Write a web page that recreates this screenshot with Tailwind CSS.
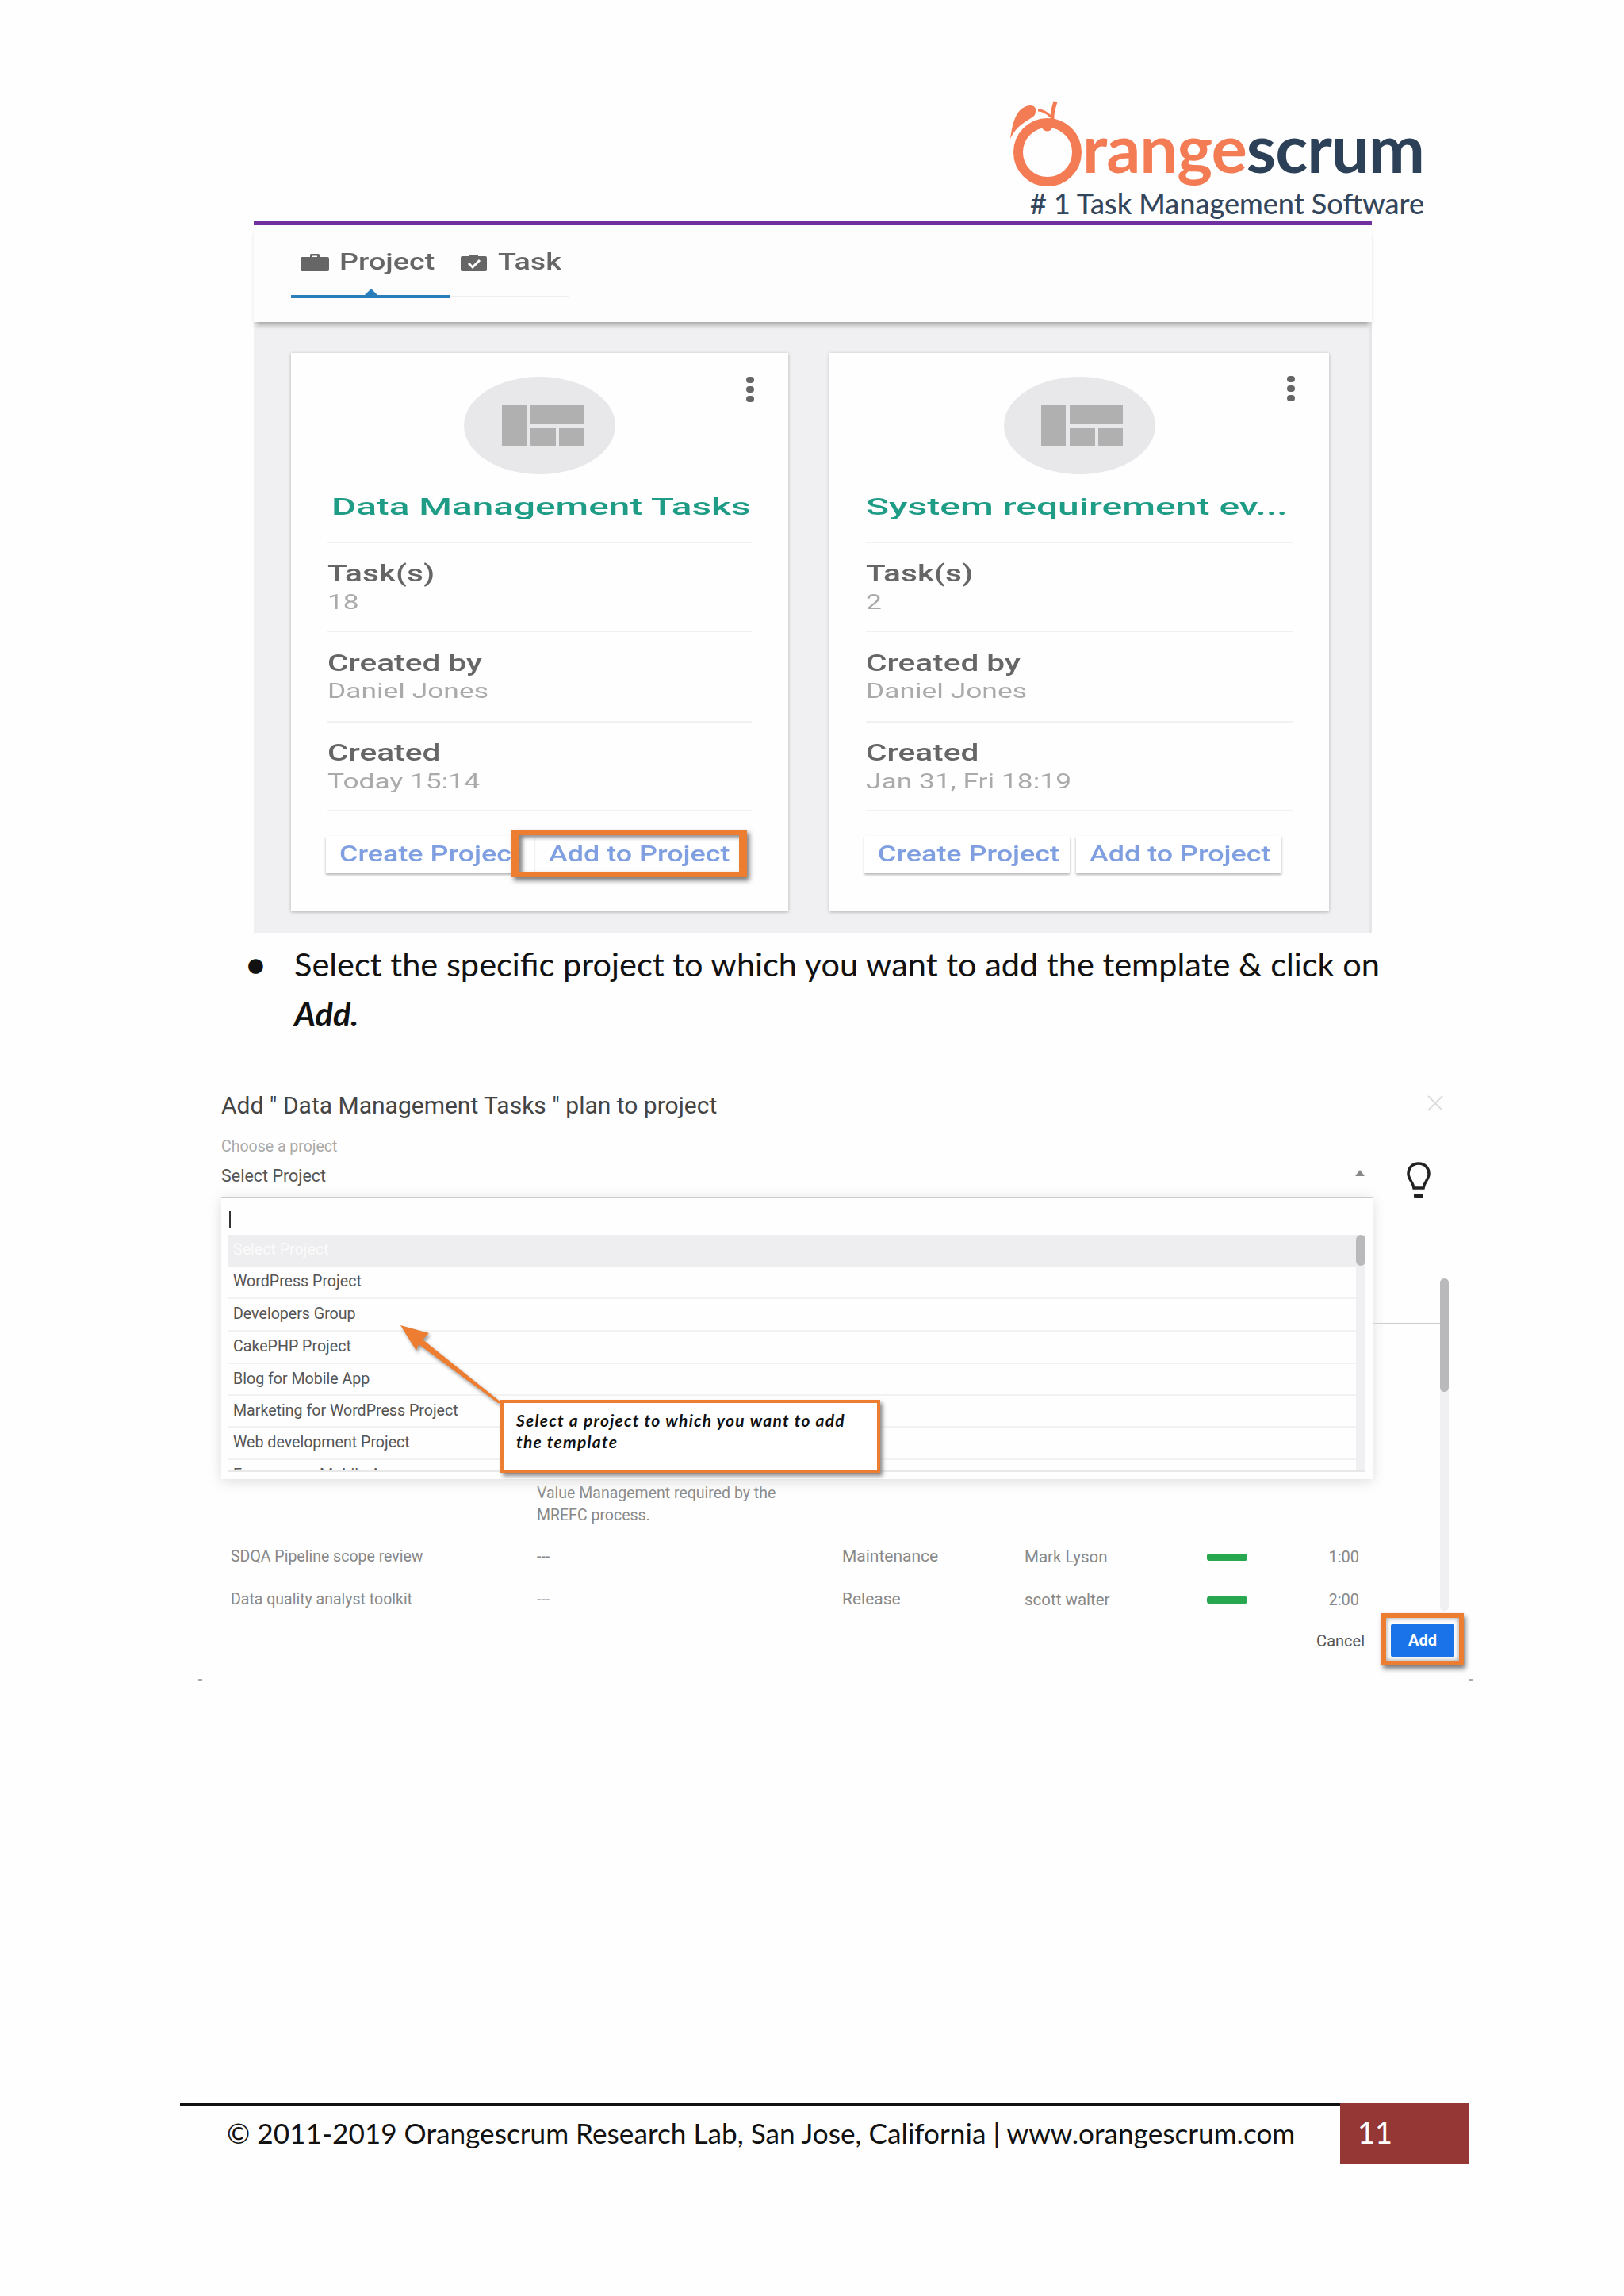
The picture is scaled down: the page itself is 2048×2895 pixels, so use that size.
<!DOCTYPE html>
<html>
<head>
  <meta charset="UTF-8">
  <title>Orangescrum - Add template to project</title>
  <script src="https://cdn.jsdelivr.net/npm/@tailwindcss/browser@4"></script>
</head>
<body class="bg-[#fefefe]">
<div class="w-[2048px] h-[2895px] overflow-hidden relative [font-family:Roboto,sans-serif]">

  <!-- logo -->
  <div class="h-[279px] flex justify-end pr-[252px]">
    <div class="w-[530px] h-full relative">
      <svg class="absolute left-[3px] top-[125px]" width="105" height="115" viewBox="0 0 105 115" fill="none">
        <ellipse cx="52" cy="67" rx="37" ry="37" stroke="#f47c55" stroke-width="12"/>
        <path d="M5 50C8 30 12 10 30 8C38 8 38 14 36 20C28 28 15 30 5 50Z" fill="#f47c55"/>
        <path d="M44 26C46 42 58 42 58 26C57 18 60 10 62 3" stroke="#f47c55" stroke-width="5"/>
        <path d="M40 14C46 14 52 18 56 22" stroke="#f47c55" stroke-width="3"/>
      </svg>
      <div class="absolute right-0 top-[135px] text-[85px] leading-[100px] tracking-[-1px] font-bold [font-family:Lato,sans-serif] text-[#f47c55]">range<span class="text-[#2c4057]">scrum</span></div>
      <div class="absolute right-0 top-[235px] text-[36px] leading-[42px] font-medium [font-family:Lato,sans-serif] text-[#34465c] whitespace-nowrap"># 1 Task Management Software</div>
    </div>
  </div>

  <div class="ml-[320px] w-[1410px] h-[5px] bg-[#7030a0]"></div>

  <!-- tabs -->
  <div class="ml-[320px] w-[1410px] h-[122px] bg-[#fdfdfd] relative z-10 shadow-[0_7px_6px_-3px_#a8a8a8]">
    <div class="flex items-center pt-[28px] pl-[59px] h-[65px] text-[#666]">
      <svg width="36" height="22" viewBox="0 0 36 22" fill="#666"><path d="M12 4V1.5A1.5 1.5 0 0 1 13.500 0H22.500A1.500 1.500 0 0 1 24 1.500V4H34A2 2 0 0 1 36 6V20A2 2 0 0 1 34 22H2A2 2 0 0 1 0 20V6A2 2 0 0 1 2 4ZM15 4H21V2.500H15Z"/></svg>
      <span class="ml-[13px] w-[153px] text-[29px] font-medium inline-block origin-left scale-x-[1.3] leading-none">Project</span>
      <svg width="33" height="22" viewBox="0 0 33 22"><path d="M2 3H11V1H22V3H31A2 2 0 0 1 33 5V20A2 2 0 0 1 31 22H2A2 2 0 0 1 0 20V5A2 2 0 0 1 2 3Z" fill="#666"/><path d="M10 12L15 17L24 8" stroke="#fff" stroke-width="3" fill="none"/></svg>
      <span class="ml-[14px] text-[29px] font-medium inline-block origin-left scale-x-[1.3] leading-none">Task</span>
    </div>
    <div class="ml-[47px] mt-[23px] flex w-[350px] relative">
      <div class="w-[200px] h-[4px] bg-[#2a7fbb]"></div>
      <div class="w-[150px] h-[2px] mt-[1px] bg-[#eeeeee]"></div>
      <div class="absolute left-[92px] top-[-8px] w-0 h-0 border-x-[9px] border-x-transparent border-b-[9px] border-b-[#2a7fbb]"></div>
    </div>
  </div>

  <!-- template cards -->
  <div class="ml-[320px] w-[1410px] h-[770px] bg-[#f0f0f2] flex pl-[47px] pt-[39px] gap-[52px] relative border-r-[4px] border-r-[#e6e6e8]">

    <div class="w-[627px] h-[704px] bg-[#fefefe] shadow-[0_1px_4px_#b0b0b0] px-[46px] relative">
      <div class="absolute left-[574px] top-[30px] flex flex-col gap-[4px]">
        <span class="block w-[10px] h-[8px] rounded-full bg-[#666]"></span>
        <span class="block w-[10px] h-[8px] rounded-full bg-[#666]"></span>
        <span class="block w-[10px] h-[8px] rounded-full bg-[#666]"></span>
      </div>
      <div class="pt-[30px] flex justify-center">
        <div class="w-[191px] h-[123px] pl-[7px] rounded-[50%] bg-[#e8e8ea] flex items-center justify-center gap-[5px]">
          <div class="w-[31px] h-[51px] bg-[#b0b0b0]"></div>
          <div class="flex flex-col gap-[6px]">
            <div class="w-[67px] h-[23px] bg-[#b0b0b0]"></div>
            <div class="flex gap-[4px]"><div class="w-[32px] h-[22px] bg-[#b0b0b0]"></div><div class="w-[31px] h-[22px] bg-[#b0b0b0]"></div></div>
          </div>
        </div>
      </div>
      <div class="h-[87px] pt-[21px] pl-[5px] border-b-2 border-[#f1f1f1] text-[30px] leading-[40px] font-medium text-[#1f9c86] whitespace-nowrap"><span class="inline-block origin-left scale-x-[1.59]">Data Management Tasks</span></div>
      <div class="h-[112px] pt-[22px] border-b-2 border-[#f1f1f1]">
        <div class="h-[32px] leading-[32px] text-[29px] font-medium text-[#666]"><span class="inline-block origin-left scale-x-[1.4]">Task(s)</span></div>
        <div class="h-[40px] leading-[40px] text-[26px] text-[#aaa]"><span class="inline-block origin-left scale-x-[1.36]">18</span></div>
      </div>
      <div class="h-[114px] pt-[23px] border-b-2 border-[#f1f1f1]">
        <div class="h-[32px] leading-[32px] text-[29px] font-medium text-[#666]"><span class="inline-block origin-left scale-x-[1.4]">Created by</span></div>
        <div class="h-[39px] leading-[39px] text-[26px] text-[#aaa]"><span class="inline-block origin-left scale-x-[1.36]">Daniel Jones</span></div>
      </div>
      <div class="h-[112px] pt-[22px] border-b-2 border-[#f1f1f1]">
        <div class="h-[32px] leading-[32px] text-[29px] font-medium text-[#666]"><span class="inline-block origin-left scale-x-[1.4]">Created</span></div>
        <div class="h-[40px] leading-[40px] text-[26px] text-[#aaa]"><span class="inline-block origin-left scale-x-[1.36]">Today 15:14</span></div>
      </div>
      <div class="mt-[31px] flex gap-[8px] -ml-[2px] text-[27px] font-medium text-[#7f9fe0] relative">
        <div class="w-[262px] h-[47px] bg-white shadow-[0_2px_3px_#b5b5b5] pl-[17px] leading-[47px] whitespace-nowrap"><span class="inline-block origin-left scale-x-[1.33]">Create Project</span></div>
        <div class="w-[240px] h-[47px] pl-[11px] leading-[47px] whitespace-nowrap"><span class="inline-block origin-left scale-x-[1.33]">Add to Project</span></div>
        <div class="absolute left-[234px] top-[-8px] w-[297px] h-[60px] border-y-[7px] border-x-[10px] border-[#ed7d31] shadow-[3px_4px_6px_#777,inset_4px_3px_5px_#888]"></div>
      </div>
    </div>

    <div class="w-[630px] h-[704px] bg-[#fefefe] shadow-[0_1px_4px_#b0b0b0] px-[46px] relative">
      <div class="absolute left-[577px] top-[29px] flex flex-col gap-[4px]">
        <span class="block w-[10px] h-[8px] rounded-full bg-[#666]"></span>
        <span class="block w-[10px] h-[8px] rounded-full bg-[#666]"></span>
        <span class="block w-[10px] h-[8px] rounded-full bg-[#666]"></span>
      </div>
      <div class="pt-[30px] flex justify-center">
        <div class="w-[191px] h-[123px] pl-[7px] rounded-[50%] bg-[#e8e8ea] flex items-center justify-center gap-[5px]">
          <div class="w-[31px] h-[51px] bg-[#b0b0b0]"></div>
          <div class="flex flex-col gap-[6px]">
            <div class="w-[67px] h-[23px] bg-[#b0b0b0]"></div>
            <div class="flex gap-[4px]"><div class="w-[32px] h-[22px] bg-[#b0b0b0]"></div><div class="w-[31px] h-[22px] bg-[#b0b0b0]"></div></div>
          </div>
        </div>
      </div>
      <div class="h-[87px] pt-[21px] border-b-2 border-[#f1f1f1] text-[30px] leading-[40px] font-medium text-[#1f9c86] whitespace-nowrap"><span class="inline-block origin-left scale-x-[1.6]">System requirement ev...</span></div>
      <div class="h-[112px] pt-[22px] border-b-2 border-[#f1f1f1]">
        <div class="h-[32px] leading-[32px] text-[29px] font-medium text-[#666]"><span class="inline-block origin-left scale-x-[1.4]">Task(s)</span></div>
        <div class="h-[40px] leading-[40px] text-[26px] text-[#aaa]"><span class="inline-block origin-left scale-x-[1.36]">2</span></div>
      </div>
      <div class="h-[114px] pt-[23px] border-b-2 border-[#f1f1f1]">
        <div class="h-[32px] leading-[32px] text-[29px] font-medium text-[#666]"><span class="inline-block origin-left scale-x-[1.4]">Created by</span></div>
        <div class="h-[39px] leading-[39px] text-[26px] text-[#aaa]"><span class="inline-block origin-left scale-x-[1.36]">Daniel Jones</span></div>
      </div>
      <div class="h-[112px] pt-[22px] border-b-2 border-[#f1f1f1]">
        <div class="h-[32px] leading-[32px] text-[29px] font-medium text-[#666]"><span class="inline-block origin-left scale-x-[1.4]">Created</span></div>
        <div class="h-[40px] leading-[40px] text-[26px] text-[#aaa]"><span class="inline-block origin-left scale-x-[1.36]">Jan 31, Fri 18:19</span></div>
      </div>
      <div class="mt-[31px] flex gap-[8px] -ml-[2px] text-[27px] font-medium text-[#7f9fe0]">
        <div class="w-[259px] h-[47px] bg-white shadow-[0_2px_3px_#b5b5b5] pl-[17px] leading-[47px] whitespace-nowrap"><span class="inline-block origin-left scale-x-[1.33]">Create Project</span></div>
        <div class="w-[259px] h-[47px] bg-white shadow-[0_2px_3px_#b5b5b5] pl-[17px] leading-[47px] whitespace-nowrap"><span class="inline-block origin-left scale-x-[1.33]">Add to Project</span></div>
      </div>
    </div>
  </div>

  <!-- bullet -->
  <div class="ml-[311px] mt-[8px] w-[1460px] h-[126px] flex [font-family:Lato,sans-serif] text-[41.500px] leading-[63px] text-[#111]">
    <div class="w-[60px] shrink-0 text-[38px]">&#9679;</div>
    <p>Select the specific project to which you want to add the template &amp; click on<br><b class="italic">Add.</b></p>
  </div>

  <!-- add to project dialog -->
  <div class="ml-[279px] w-[1570px] h-[1342px] relative">
    <div class="pt-[64px] h-[104px] text-[30px] leading-[40px] text-[#444]">Add " Data Management Tasks " plan to project</div>
    <div class="mt-[17px] h-[30px] text-[19.500px] leading-[30px] text-[#aaa]">Choose a project</div>
    <div class="mt-[7px] h-[30px] text-[21.500px] leading-[30px] text-[#555]">Select Project</div>

    <div class="absolute left-[1521px] top-[71px] text-[#ddd]">
      <svg width="20" height="20" viewBox="0 0 20 20" stroke="#dcdcdc" stroke-width="2"><path d="M1 1L19 19M19 1L1 19"/></svg>
    </div>
    <div class="absolute left-[1430px] top-[165px] w-0 h-0 border-x-[6px] border-x-transparent border-b-[8px] border-b-[#888]"></div>
    <svg class="absolute left-[1494px] top-[155px]" width="32" height="45" viewBox="0 0 32 45" fill="none">
      <path d="M16 2C7 2 3 9 3 15C3 22 9 25 10 33H22C23 25 29 22 29 15C29 9 25 2 16 2Z" stroke="#222" stroke-width="3.500"/>
      <rect x="10" y="40" width="12" height="5" rx="1" fill="#222"/>
    </svg>

    <!-- table behind the dropdown -->
    <div class="mt-[371px] ml-[12px] w-[1423px] text-[19.500px] text-[#888]">
      <div class="grid grid-cols-[386px_385px_230px_230px_1fr] leading-[28px] h-[67px]">
        <div></div>
        <div>Value Management required by the<br>MREFC process.</div>
      </div>
      <div class="grid grid-cols-[386px_385px_230px_230px_1fr] items-center h-[54px]">
        <div>SDQA Pipeline scope review</div>
        <div>---</div>
        <div class="text-[21px]">Maintenance</div>
        <div class="text-[20.500px]">Mark Lyson</div>
        <div class="flex justify-between items-center"><span class="block w-[51px] h-[9px] rounded-[3px] bg-[#27a84f]"></span><span class="text-[20px]">1:00</span></div>
      </div>
      <div class="grid grid-cols-[386px_385px_230px_230px_1fr] items-center h-[54px]">
        <div>Data quality analyst toolkit</div>
        <div>---</div>
        <div class="text-[21px]">Release</div>
        <div class="text-[20.500px]">scott walter</div>
        <div class="flex justify-between items-center"><span class="block w-[51px] h-[9px] rounded-[3px] bg-[#27a84f]"></span><span class="text-[20px]">2:00</span></div>
      </div>
    </div>
    <div class="mt-[4px] flex justify-end items-center w-[1555px] gap-[33px]">
      <span class="text-[20px] text-[#555]">Cancel</span>
      <div class="w-[80px] h-[41px] rounded-[2px] bg-[#1a73e8] text-white font-bold text-[20px] leading-[41px] text-center">Add</div>
    </div>
    <div class="absolute left-[1463px] top-[724px] w-[104px] h-[66px] border-[6px] border-[#ed7d31] shadow-[2px_4px_6px_#777,inset_0_0_6px_#999]"></div>

    <!-- dialog scroller -->
    <div class="absolute left-[1453px] top-[358px] w-[84px] h-[2px] bg-[#cccccc]"></div>
    <div class="absolute left-[1537px] top-[302px] w-[11px] h-[419px] rounded-full bg-[#f0eff2]">
      <div class="w-[11px] h-[143px] rounded-full bg-[#b9b9bb]"></div>
    </div>

    <!-- dropdown -->
    <div class="absolute left-0 top-[199px] w-[1452px] h-[356px] bg-[#fefefe] border-t-2 border-[#cccccc] shadow-[0_3px_16px_#dddddd] px-[9px] overflow-hidden">
      <div class="h-[46px] pt-[16px] pl-px"><div class="w-[2px] h-[22px] bg-[#333]"></div></div>
      <div class="w-[1434px] h-[299px] relative overflow-hidden border-b-2 border-[#e8e8e8] text-[19.600px] text-[#555]">
        <div class="absolute right-0 top-0 w-[12px] h-full bg-[#f0eff2]"><div class="w-[12px] h-[39px] rounded-full bg-[#b9b9bb]"></div></div>
        <div class="w-[1422px]">
          <div class="h-[40px] leading-[38px] pl-[6px] bg-[#eeedef] text-[#fafafa]">Select Project</div>
          <div class="h-[41px] leading-[38px] pl-[6px] border-b-2 border-[#f2f2f2]">WordPress Project</div>
          <div class="h-[41px] leading-[38px] pl-[6px] border-b-2 border-[#f2f2f2]">Developers Group</div>
          <div class="h-[41px] leading-[38px] pl-[6px] border-b-2 border-[#f2f2f2]">CakePHP Project</div>
          <div class="h-[40px] leading-[38px] pl-[6px] border-b-2 border-[#f2f2f2]">Blog for Mobile App</div>
          <div class="h-[40px] leading-[38px] pl-[6px] border-b-2 border-[#f2f2f2]">Marketing for WordPress Project</div>
          <div class="h-[41px] leading-[38px] pl-[6px] border-b-2 border-[#f2f2f2]">Web development Project</div>
          <div class="h-[15px] leading-[38px] pl-[6px] overflow-hidden">Ecommerce Mobile App</div>
        </div>
      </div>
    </div>

    <!-- callout -->
    <svg class="absolute left-[221px] top-[355px] [filter:drop-shadow(2px_3px_2px_#999)]" width="140" height="110" viewBox="0 0 140 110" fill="none">
      <path d="M5 6L41 16L33 24L133 104L128 104L28 30L25 38Z" fill="#ed7d31"/>
    </svg>
    <div class="absolute left-[352px] top-[455px] w-[479px] h-[92px] bg-white border-[4px] border-[#ed7d31] shadow-[3px_4px_5px_#888] pl-[16px] pt-[8px] [font-family:Lato,sans-serif] font-bold italic text-[21px] leading-[27px] text-[#111] tracking-[1.260px]">Select a project to which you want to add<br>the template</div>

    <div class="absolute left-[-29px] top-[807px] w-[5px] h-[2px] bg-[#aaa]"></div>
    <div class="absolute left-[1574px] top-[807px] w-[5px] h-[2px] bg-[#aaa]"></div>
  </div>

  <!-- footer -->
  <div class="ml-[227px] w-[1625px] h-[76px] flex [font-family:Lato,sans-serif]">
    <div class="w-[1463px] border-t-[3px] border-[#111] pl-[59px] text-[35.200px] leading-[69px] text-[#111] whitespace-nowrap">© 2011-2019 Orangescrum Research Lab, San Jose, California | www.orangescrum.com</div>
    <div class="w-[162px] bg-[#953735] pl-[22px] text-[38px] leading-[72px] text-white">11</div>
  </div>
</div>
</body>
</html>
